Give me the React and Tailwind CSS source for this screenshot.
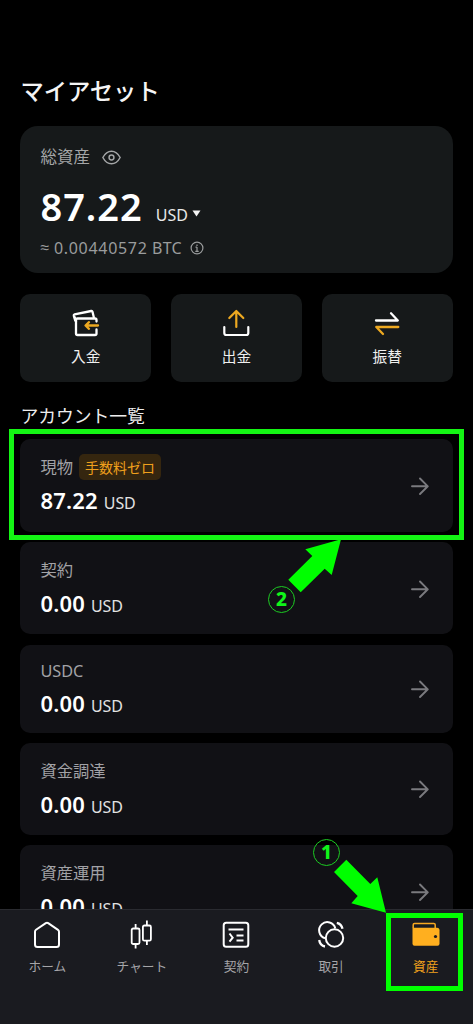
import { clsx } from 'clsx';

const actions = [
  { label: '入金', Icon: DepositIcon },
  { label: '出金', Icon: WithdrawIcon },
  { label: '振替', Icon: TransferIcon },
];

const accounts = [
  { name: '現物', badge: '手数料ゼロ', amount: '87.22', size: 'h-[93px]', highlighted: true },
  { name: '契約', amount: '0.00', size: 'h-[92px]' },
  { name: 'USDC', amount: '0.00', size: 'h-[88px]', compact: true },
  { name: '資金調達', amount: '0.00', size: 'h-[92px]' },
  { name: '資産運用', amount: '0.00', size: 'h-[92px]' },
];

const tabs = [
  { label: 'ホーム', Icon: HomeIcon },
  { label: 'チャート', Icon: ChartIcon },
  { label: '契約', Icon: ContractIcon },
  { label: '取引', Icon: TradeIcon },
  { label: '資産', Icon: WalletIcon, active: true },
];

function DepositIcon() {
  return (
    <svg className="h-8 w-8" viewBox="0 0 32 32" fill="none" strokeWidth="2.3" strokeLinejoin="round" strokeLinecap="round">
      <path d="M5.2 12.5 3.800 7.600q-.2-1 .8-1.300L21.200 3q1-.2 1.300.8L23.800 9.300" stroke="#fff" />
      <path d="M4.800 9.500 6 13" stroke="#fff" />
      <path d="M26.500 13.500V12q0-1.500-1.500-1.500H7.500Q6 10.500 6 12v13.500Q6 27 7.500 27H25q1.500 0 1.500-1.500V21.500" stroke="#fff" />
      <path d="M28 17.500H16.500M19 14.200l-3.500 3.300L19 20.800" stroke="#eda921" />
    </svg>
  );
}

function WithdrawIcon() {
  return (
    <svg className="h-8 w-8" viewBox="0 0 32 32" fill="none" strokeWidth="2.200" strokeLinejoin="round" strokeLinecap="round">
      <path d="M4.300 19v6q0 2 2 2h20q2 0 2-2v-6" stroke="#fff" />
      <path d="M16.300 19V3.500M9.300 10l7-7 7 7" stroke="#eda921" />
    </svg>
  );
}

function TransferIcon() {
  return (
    <svg className="h-8 w-8" viewBox="0 0 32 32" fill="none" strokeWidth="2.300" strokeLinejoin="round" strokeLinecap="round">
      <path d="M5 12.500h21.800L20 5.300" stroke="#fff" />
      <path d="M27.300 19H5.300L12 26" stroke="#eda921" />
    </svg>
  );
}

function HomeIcon() {
  return (
    <svg className="h-[30px] w-[30px]" viewBox="0 0 30 30" fill="none" stroke="#fff" strokeWidth="2" strokeLinejoin="round">
      <path d="M3 11.800q0-1.300 1-2L13.800 3.200q1.200-.8 2.400 0L26 9.800q1 .7 1 2V24.500q0 2.500-2.500 2.500h-19Q3 27 3 24.500z" />
    </svg>
  );
}

function ChartIcon() {
  return (
    <svg className="h-[30px] w-[30px]" viewBox="0 0 30 30" fill="none" stroke="#fff" strokeWidth="1.800">
      <rect x="4.700" y="8.500" width="7.800" height="15.500" rx="1.500" />
      <rect x="15.900" y="5.500" width="8" height="15.200" rx="1.500" />
      <path d="M8.600 4v4.500M8.600 24v4.500M19.900.500v5M19.900 20.700V25" />
    </svg>
  );
}

function ContractIcon() {
  return (
    <svg className="h-[30px] w-[30px]" viewBox="0 0 30 30" fill="none" stroke="#fff" strokeWidth="2">
      <rect x="2.700" y="2.700" width="24.600" height="24" rx="2.500" />
      <path d="M7.500 9.500h15M15.500 15.500h7M15.500 20.500h7M8.500 13.500l3.200 4.200-3.200 4" />
    </svg>
  );
}

function TradeIcon() {
  return (
    <svg className="h-[30px] w-[30px]" viewBox="0 0 30 30" fill="none" stroke="#fff" strokeWidth="2">
      <circle cx="18.500" cy="18" r="8.700" />
      <path d="M9 18.200A8.200 8.200 0 1 1 19.300 8.400" />
      <path d="M20.800 2.800q4.700 1 5.700 6M3.200 20q.8 5.500 5.800 6.500" strokeWidth="2.300" />
    </svg>
  );
}

function WalletIcon() {
  return (
    <svg className="h-[30px] w-[30px]" viewBox="0 0 30 30">
      <path d="M2.200 8V4.800q0-1.400 1.400-1.400h19.200q1.400 0 1.400 1.400V8" fill="none" stroke="#f9a920" strokeWidth="1.500" />
      <path d="M1.500 7.800h24.500q2.500 0 2.500 2.500v13.500q0 2-2 2h-23q-2 0-2-2z" fill="#ffaf1f" />
      <circle cx="24.500" cy="16.500" r="1.600" fill="#1a1b20" />
    </svg>
  );
}

function AccountCard({ name, badge, amount, size, compact, highlighted }) {
  return (
    <div
      className={clsx(
        'relative flex shrink-0 justify-between rounded-[10px] bg-[#111115] pr-[22px] pl-[20px]',
        size,
      )}
    >
      <div className="pt-[15px]">
        <div className={clsx('flex items-center gap-[6px] text-[16.3px] text-[#a2a2a6]', compact ? 'h-[23px]' : 'h-[26px]')}>
          {name}
          {badge && (
            <span className="flex h-[26px] items-center rounded-[5px] bg-[#35260f] px-[6px] text-[14px] text-[#f0a01c]">
              {badge}
            </span>
          )}
        </div>
        <div className="mt-[4px] flex h-[32px] items-baseline gap-[6px] leading-[32px]">
          <span className="text-[22px] font-semibold tracking-[0.200px] text-white">{amount}</span>
          <span className="text-[16px] tracking-[-0.1px] text-[#e2e2e2]">USD</span>
        </div>
      </div>
      <svg className="mt-px h-[22px] w-[22px] self-center" viewBox="0 0 22 22" fill="none" stroke="#7a7a7e" strokeWidth="1.900" strokeLinecap="round" strokeLinejoin="round">
        <path d="M3 11.300h15.500M11 3.500l7.800 7.800L11 19" />
      </svg>
      {highlighted && <div className="absolute -top-[10.500px] -right-[11px] -bottom-[7.500px] -left-[11.500px] border-[5px] border-[#14f514]" />}
    </div>
  );
}

function StepBadge({ children, className }) {
  return (
    <div
      className={clsx(
        'absolute flex h-[27px] w-[27px] items-center justify-center rounded-full border border-[#1ccb22] text-[19px] leading-none font-extrabold text-[#10f51a]',
        className,
      )}
    >
      {children}
    </div>
  );
}

export default function App() {
  return (
    <div className="relative flex h-[1024px] w-full flex-col overflow-hidden bg-black font-['Noto_Sans','Noto_Sans_CJK_JP',sans-serif] text-white">
      <main className="flex min-h-0 flex-1 flex-col overflow-hidden px-[20.400px] pt-[74px]">
        <h1 className="h-[52px] shrink-0 text-[23.300px] leading-[34px] font-medium text-[#f5f5f5]">マイアセット</h1>

        <section className="h-[147px] shrink-0 rounded-[18px] bg-[#16191a] px-[20px] pt-[19.500px]">
          <div className="flex h-6 items-center gap-[12.500px] text-[16.500px] text-[#a4a6a7]">
            総資産
            <svg className="h-[19px] w-[19px]" viewBox="0 0 18 18" fill="none" stroke="currentColor" strokeWidth="1.400">
              <path d="M.8 9Q4 3 9 3t8.200 6Q14 15 9 15T.8 9Z" />
              <circle cx="9" cy="9" r="2.300" />
            </svg>
          </div>
          <div className="mt-[11.500px] flex h-[50px] items-baseline leading-[50px]">
            <span className="text-[38px] font-semibold tracking-[1px]">87.22</span>
            <span className="ml-[13px] text-[16px] text-[#e8e8e8]">USD</span>
            <svg className="relative top-[7px] ml-[4px] h-[7px] w-[9px] self-center" viewBox="0 0 9 7">
              <path d="M.5.500h8L4.500 6.500z" fill="#f4f4f4" />
            </svg>
          </div>
          <div className="mt-[4.500px] flex h-6 items-center text-[16px] text-[#9a9c9d]">
            <span className="w-[13.500px] font-['Liberation_Sans',sans-serif]">≈</span>
            <span className="tracking-[0.700px]">0.00440572</span>
            <span className="ml-[4.500px] tracking-[0.200px]">BTC</span>
            <svg className="ml-[8px] h-[14px] w-[14px]" viewBox="0 0 14 14" fill="none" stroke="currentColor" strokeWidth="1.200">
              <circle cx="7" cy="7" r="5.900" />
              <path d="M7 6v4.500M7 3.500V5M5.500 6.200H7M5.300 10.300h3.400" />
            </svg>
          </div>
        </section>

        <section className="mt-[21px] grid h-[88px] shrink-0 grid-cols-3 gap-[20px]">
          {actions.map(({ label, Icon }) => (
            <button key={label} className="flex flex-col items-center rounded-[10px] bg-[#16191a] pt-[14px]">
              <Icon />
              <span className="mt-[5px] text-[14.700px] leading-[22px] text-[#f0f0f0]">{label}</span>
            </button>
          ))}
        </section>

        <h2 className="mt-[20px] h-[37px] shrink-0 text-[17.800px] leading-[28px] text-[#ededed]">アカウント一覧</h2>

        <section className="flex flex-col gap-[10.300px]">
          {accounts.map((account) => (
            <AccountCard key={account.name} {...account} />
          ))}
        </section>
      </main>

      <nav className="grid h-[115px] shrink-0 grid-cols-5 border-t border-[#2a2b30] bg-[#1a1b20]">
        {tabs.map(({ label, Icon, active }) => (
          <div key={label} className="relative flex flex-col items-center pt-[10px]">
            <Icon />
            <span className={clsx('mt-[7px] text-[12.700px] leading-[18px]', active ? 'text-[#efa01d]' : 'text-[#a5a5a8]')}>
              {label}
            </span>
            {active && <div className="absolute top-[2.500px] right-[10px] h-[78px] w-[77px] border-[5px] border-[#00ff00]" />}
          </div>
        ))}
      </nav>

      <svg className="absolute top-[539px] left-[288px] h-[54px] w-[54px]" viewBox="0 0 54 54" fill="#00ff00">
        <path d="M53 .3 17.300 10.300 24.300 17 .3 40.700l12.400 12.600 24-23.600 7 6.300z" />
      </svg>
      <StepBadge className="top-[585.500px] left-[268px]">2</StepBadge>
      <svg className="absolute top-[859px] left-[333px] h-[54px] w-[54px]" viewBox="0 0 54 54" fill="#00ff00">
        <path d="M53 53.700 44.300 18.300l-7 6.700L13.300.7 1 13l23.700 24-6.400 7.300z" />
      </svg>
      <StepBadge className="top-[838.500px] left-[313px]">1</StepBadge>
    </div>
  );
}
